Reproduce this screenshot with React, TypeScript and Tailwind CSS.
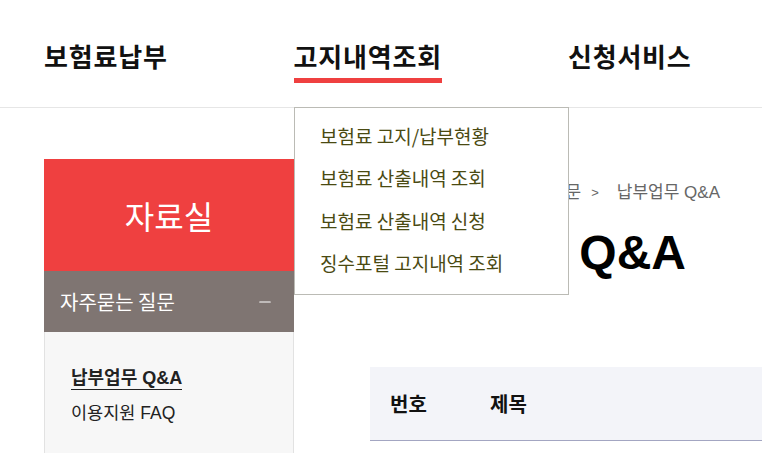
import { Minus } from "lucide-react";

const NAV = ["보험료납부", "고지내역조회", "신청서비스"];
const SUB_MENU = [
  "보험료 고지/납부현황",
  "보험료 산출내역 조회",
  "보험료 산출내역 신청",
  "징수포털 고지내역 조회",
];

const KR = { fontFamily: '"Noto Sans CJK KR", "Noto Sans", sans-serif' };
const LATIN_KR = {
  fontFamily: '"Liberation Sans", "Noto Sans CJK KR", Arial, sans-serif',
};

function Header() {
  return (
    <header className="relative h-[108px] border-b border-[#e6e6e6] bg-white">
      <nav className="flex h-full gap-[126px] pl-[44px]">
        {NAV.map((label, i) => (
          <div key={label} className="relative flex h-full items-start pt-[39px]">
            <span className="text-[26px] font-bold leading-[34px] tracking-[0.8px] text-[#111]">
              {label}
            </span>
            {i === 1 && (
              <span className="absolute left-0 right-0 top-[78px] h-[5px] bg-[#ef4040]" />
            )}
          </div>
        ))}
      </nav>

      <div className="absolute left-[294px] top-[107px] z-10 w-[275px] border border-[#bbbbb5] bg-white pb-[10px] pl-[25px] pt-[7px]">
        {SUB_MENU.map((item) => (
          <div key={item} className="text-[19px] leading-[42.3px] text-[#4a4a12]">
            {item}
          </div>
        ))}
      </div>
    </header>
  );
}

function Sidebar() {
  return (
    <aside className="w-[250px] shrink-0">
      <div className="flex h-[112px] items-center justify-center bg-[#ef4040] text-[32px] text-white">
        자료실
      </div>
      <div className="flex h-[61px] items-center justify-between bg-[#7f7572] pl-[16px] pr-[20px] text-[20px] text-white">
        <span>자주묻는 질문</span>
        <Minus className="h-[18px] w-[18px]" strokeWidth={1.5} />
      </div>
      <div className="h-[130px] border-x border-[#e2e2e2] bg-[#f7f7f7] pl-[26px] pt-[33px]">
        <div
          className="inline-block border-b-[1.5px] border-[#222] text-[18px] font-bold leading-[22px] text-[#222]"
          style={LATIN_KR}
        >
          납부업무 Q&amp;A
        </div>
        <div className="mt-[12px] text-[17.5px] leading-[22px] text-[#222]" style={LATIN_KR}>
          이용지원 FAQ
        </div>
      </div>
    </aside>
  );
}

function Content() {
  return (
    <main className="ml-[76px] flex-1 pt-[24px]">
      <div
        className="flex items-center justify-end gap-[10px] pr-[42px] text-[17px] leading-[20px] text-[#666]"
        style={LATIN_KR}
      >
        <span>자주묻는 질문</span>
        <span className="pr-[8px] text-[13px]">&gt;</span>
        <span>납부업무 Q&amp;A</span>
      </div>
      <h1
        className="mt-[22px] flex justify-end pr-[76px] text-[48px] font-bold leading-[56px] text-black"
        style={LATIN_KR}
      >
        Q&amp;A
      </h1>
      <div className="mt-[86px] flex h-[74px] items-center border-b border-[#a3a6c2] bg-[#f3f4f9] pl-[20px] text-[20px] font-bold text-[#111]">
        <span className="w-[100px]">번호</span>
        <span>제목</span>
      </div>
    </main>
  );
}

export default function App() {
  return (
    <div className="h-[453px] w-[762px] overflow-hidden bg-white" style={KR}>
      <Header />
      <div className="flex pl-[44px] pt-[51px]">
        <Sidebar />
        <Content />
      </div>
    </div>
  );
}
